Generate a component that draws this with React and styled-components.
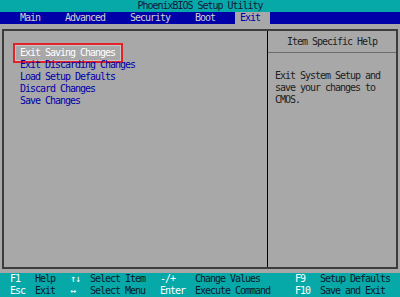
import React from "react";
import styled, { createGlobalStyle } from "styled-components";

const Global = createGlobalStyle`
  html, body { margin: 0; padding: 0; background: #a8a8a8; }
  #root { width: 400px; height: 297px; }
  *, *::before, *::after { box-sizing: border-box; }
`;

const CYAN = "#06a8a8";
const BLUE = "#0000a8";
const GRAY = "#a8a8a8";

const Screen = styled.div`
  width: 400px;
  height: 297px;
  display: flex;
  flex-direction: column;
  overflow: hidden;
  font-family: "DejaVu Sans Mono", "Liberation Mono", monospace;
  font-size: 10px;
  letter-spacing: -1.02px;
  line-height: 12px;
  white-space: pre;
`;

const TitleBar = styled.div`
  height: 12px;
  background: ${CYAN};
  color: #18183a;
  text-align: center;
`;

const TextRow = styled.div`
  display: grid;
  grid-template-columns: repeat(80, 5px);
  height: 12px;
  background: ${(p) => p.$bg || "transparent"};
`;

const Cell = styled.span`
  grid-column: ${(p) => p.$col + 1} / span ${(p) => p.$span};
  color: ${(p) => p.$color};
  background: ${(p) => p.$bg || "transparent"};
  padding-left: ${(p) => p.$pad || 0}px;
  overflow: visible;
`;

const Main = styled.div`
  flex: 1;
  background: ${GRAY};
  padding: 5px 2px 4px 2px;
  display: flex;
`;

const Frame = styled.div`
  flex: 1;
  display: flex;
  border: 2px solid #3c3c3c;
`;

const LeftPanel = styled.div`
  width: 264px;
  flex: none;
  border-right: 1px solid #000;
  padding: 16px 0 0 16px;
  display: flex;
  flex-direction: column;
  align-items: flex-start;
`;

const Item = styled.div`
  position: relative;
  color: ${(p) => (p.$selected ? "#ffffff" : BLUE)};
  height: 12px;

  ${(p) =>
    p.$selected &&
    `
    &::before {
      content: "";
      position: absolute;
      left: -7px;
      right: -8px;
      top: -4px;
      bottom: -4px;
      border: 2px solid #e3222c;
      box-shadow: inset 0 0 0 1px #c6c6c6;
      pointer-events: none;
    }
  `}
`;

const RightPanel = styled.div`
  flex: 1;
  display: flex;
  flex-direction: column;
`;

const HelpHeader = styled.div`
  height: 22px;
  display: flex;
  align-items: center;
  justify-content: center;
  color: #202020;
  border-bottom: 1px solid #6c6c6c;
`;

const HelpText = styled.div`
  padding: 17px 0 0 7px;
  color: #202020;
`;

const Footer = styled.div`
  height: 24px;
  background: ${CYAN};
  display: flex;
  flex-direction: column;
`;

const menus = [
  { label: "Main", col: 4 },
  { label: "Advanced", col: 13 },
  { label: "Security", col: 26 },
  { label: "Boot", col: 39 },
];

const items = [
  "Exit Saving Changes",
  "Exit Discarding Changes",
  "Load Setup Defaults",
  "Discard Changes",
  "Save Changes",
];

const footerRows = [
  [
    ["F1", 2, true],
    ["Help", 7],
    ["↑↓", 14, true],
    ["Select Item", 18],
    ["-/+", 32, true],
    ["Change Values", 39],
    ["F9", 59, true],
    ["Setup Defaults", 64],
  ],
  [
    ["Esc", 2, true],
    ["Exit", 7],
    ["↔", 14, true],
    ["Select Menu", 18],
    ["Enter", 32, true],
    ["Execute Command", 39],
    ["F10", 59, true],
    ["Save and Exit", 64],
  ],
];

export default function App() {
  return (
    <>
      <Global />
      <Screen>
        <TitleBar>PhoenixBIOS Setup Utility</TitleBar>
        <TextRow $bg={BLUE}>
          {menus.map((m) => (
            <Cell key={m.label} $col={m.col} $span={m.label.length} $color="#d0d0d0">
              {m.label}
            </Cell>
          ))}
          <Cell $col={47} $span={7} $color={BLUE} $bg={GRAY} $pad={5}>
            Exit
          </Cell>
        </TextRow>
        <Main>
          <Frame>
            <LeftPanel>
              {items.map((t, i) => (
                <Item key={t} $selected={i === 0}>
                  {t}
                </Item>
              ))}
            </LeftPanel>
            <RightPanel>
              <HelpHeader>Item Specific Help</HelpHeader>
              <HelpText>
                {"Exit System Setup and\nsave your changes to\nCMOS."}
              </HelpText>
            </RightPanel>
          </Frame>
        </Main>
        <Footer>
          {footerRows.map((row, r) => (
            <TextRow key={r}>
              {row.map(([t, col, key]) => (
                <Cell key={t} $col={col} $span={Math.max(t.length, 2)} $color={key ? "#ffffff" : "#0c1a2a"}>
                  {t}
                </Cell>
              ))}
            </TextRow>
          ))}
        </Footer>
      </Screen>
    </>
  );
}
